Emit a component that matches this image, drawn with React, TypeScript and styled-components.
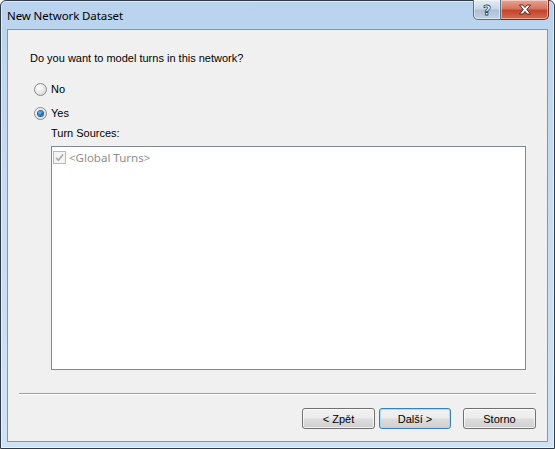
import React from "react";
import styled, { createGlobalStyle } from "styled-components";

const GlobalStyle = createGlobalStyle`
  html, body {
    margin: 0;
    padding: 0;
    background: #ffffff;
  }
  #root {
    width: 555px;
    height: 449px;
  }
`;

const Window = styled.div`
  box-sizing: border-box;
  width: 555px;
  height: 449px;
  display: flex;
  flex-direction: column;
  padding: 0 6px 6px 6px;
  border: 1px solid #2f3a48;
  border-radius: 6px 6px 0 0;
  background: linear-gradient(180deg, #b9d3ee 0%, #c7dcf2 40%, #cfe2f5 100%);
  box-shadow: inset 0 0 0 1px rgba(255, 255, 255, 0.55);
`;

const TitleBar = styled.div`
  height: 28px;
  display: flex;
  align-items: flex-start;
  justify-content: space-between;
`;

const Title = styled.span`
  margin-top: 7px;
  font-family: "Noto Sans", "Open Sans", sans-serif;
  font-size: 11.5px;
  color: #000;
  letter-spacing: -0.1px;
`;

const CaptionButtons = styled.div`
  display: flex;
  margin-top: -1px;
  margin-right: -1px;
`;

const CaptionButton = styled.div<{ $close?: boolean }>`
  box-sizing: border-box;
  height: 20px;
  width: ${(p) => (p.$close ? "48px" : "28px")};
  display: flex;
  align-items: center;
  justify-content: center;
  border: 1px solid ${(p) => (p.$close ? "#6b2a22" : "#5e6f83")};
  border-top: none;
  border-radius: ${(p) => (p.$close ? "0 0 5px 0" : "0 0 0 5px")};
  border-left: ${(p) => (p.$close ? "none" : undefined)};
  background: ${(p) =>
    p.$close
      ? "linear-gradient(180deg, #e8a493 0%, #d6745f 45%, #c2452c 55%, #d86a4e 100%)"
      : "linear-gradient(180deg, #e4edf6 0%, #c9d7e6 45%, #aebfd3 55%, #c3d3e4 100%)"};
  box-shadow: inset 0 0 0 1px rgba(255, 255, 255, 0.45);
`;

const HelpGlyph = styled.span`
  font-family: "DejaVu Sans", sans-serif;
  font-weight: bold;
  font-size: 14px;
  line-height: 14px;
  color: #fff;
  -webkit-text-stroke: 0.8px #3a4656;
`;

const Client = styled.div`
  flex: 1;
  display: flex;
  flex-direction: column;
  border: 1px solid #8895a6;
  background: #f0f0f0;
  font-family: "Liberation Sans", Arial, sans-serif;
  font-size: 11px;
  color: #000;
`;

const Body = styled.div`
  display: flex;
  flex-direction: column;
  padding: 22px 20px 0 22px;
`;

const Question = styled.div`
  line-height: 13px;
`;

const RadioList = styled.div`
  display: flex;
  flex-direction: column;
  gap: 11px;
  margin-top: 18px;
  padding-left: 4px;
`;

const RadioRow = styled.label`
  display: flex;
  align-items: center;
  gap: 4px;
  height: 13px;
  line-height: 13px;
`;

const RadioCircle = styled.span<{ $checked?: boolean }>`
  box-sizing: border-box;
  width: 13px;
  height: 13px;
  border-radius: 50%;
  border: 1px solid #8a8a8a;
  background: radial-gradient(circle at 35% 35%, #ffffff 0%, #e6e6e6 55%, #cfcfcf 100%);
  display: flex;
  align-items: center;
  justify-content: center;

  &::after {
    content: "";
    display: ${(p) => (p.$checked ? "block" : "none")};
    width: 5px;
    height: 5px;
    border-radius: 50%;
    background: radial-gradient(circle at 40% 35%, #7fc4f4 0%, #1b6fb8 55%, #0b3e72 100%);
    box-shadow: 0 0 0 1px #2c5f92;
  }
`;

const Section = styled.div`
  display: flex;
  flex-direction: column;
  margin-top: 7px;
  padding-left: 21px;
`;

const SectionLabel = styled.div`
  line-height: 13px;
`;

const ListBox = styled.div`
  box-sizing: border-box;
  height: 224px;
  margin-top: 6px;
  margin-right: 1px;
  border: 1px solid #828790;
  background: #fff;
  padding: 3px 1px;
`;

const ListItem = styled.div`
  display: flex;
  align-items: center;
  gap: 3px;
  height: 14px;
  font-family: "Noto Sans", "Open Sans", sans-serif;
  font-size: 11.5px;
  color: #8d8d8d;
`;

const Check = styled.span`
  box-sizing: border-box;
  width: 13px;
  height: 13px;
  border: 1px solid #b9b9b9;
  background: #f4f4f4;
  display: flex;
  align-items: center;
  justify-content: center;
`;

const Separator = styled.div`
  height: 0;
  margin: 23px 11px 0 11px;
  border-top: 1px solid #a0a0a0;
  border-bottom: 1px solid #ffffff;
`;

const ButtonRow = styled.div`
  display: flex;
  justify-content: flex-end;
  gap: 4px;
  margin-top: 13px;
  padding-right: 11px;
`;

const Button = styled.button<{ $default?: boolean; $gapBefore?: boolean }>`
  box-sizing: border-box;
  width: ${(p) => (p.$default ? "72px" : "73px")};
  height: 21px;
  margin-left: ${(p) => (p.$gapBefore ? "8px" : "0")};
  padding: 0;
  border: 1px solid ${(p) => (p.$default ? "#3c7fb1" : "#707070")};
  border-radius: 3px;
  background: linear-gradient(180deg, #f2f2f2 0%, #ebebeb 48%, #dddddd 52%, #cfcfcf 100%);
  box-shadow: inset 0 0 0 1px ${(p) => (p.$default ? "#a8dcf5" : "rgba(255,255,255,0.7)")};
  font-family: "Liberation Sans", Arial, sans-serif;
  font-size: 11px;
  color: #000;
`;

export default function App() {
  return (
    <>
      <GlobalStyle />
      <Window>
        <TitleBar>
          <Title>New Network Dataset</Title>
          <CaptionButtons>
            <CaptionButton>
              <HelpGlyph>?</HelpGlyph>
            </CaptionButton>
            <CaptionButton $close>
              <svg width="14" height="11" viewBox="0 0 14 11">
                <path
                  d="M1.5 1 L5 1 L7 3.6 L9 1 L12.5 1 L8.8 5.5 L12.5 10 L9 10 L7 7.4 L5 10 L1.5 10 L5.2 5.5 Z"
                  fill="#ffffff"
                  stroke="#4a1a14"
                  strokeWidth="0.9"
                  strokeLinejoin="round"
                />
              </svg>
            </CaptionButton>
          </CaptionButtons>
        </TitleBar>
        <Client>
          <Body>
            <Question>Do you want to model turns in this network?</Question>
            <RadioList>
              <RadioRow>
                <RadioCircle />
                No
              </RadioRow>
              <RadioRow>
                <RadioCircle $checked />
                Yes
              </RadioRow>
            </RadioList>
            <Section>
              <SectionLabel>Turn Sources:</SectionLabel>
              <ListBox>
                <ListItem>
                  <Check>
                    <svg width="9" height="9" viewBox="0 0 9 9">
                      <path d="M1 4.8 L3.4 7.2 L8 1.6" fill="none" stroke="#a9a9a9" strokeWidth="1.6" />
                    </svg>
                  </Check>
                  &lt;Global Turns&gt;
                </ListItem>
              </ListBox>
            </Section>
          </Body>
          <Separator />
          <ButtonRow>
            <Button>&lt; Zpět</Button>
            <Button $default>Další &gt;</Button>
            <Button $gapBefore>Storno</Button>
          </ButtonRow>
        </Client>
      </Window>
    </>
  );
}
